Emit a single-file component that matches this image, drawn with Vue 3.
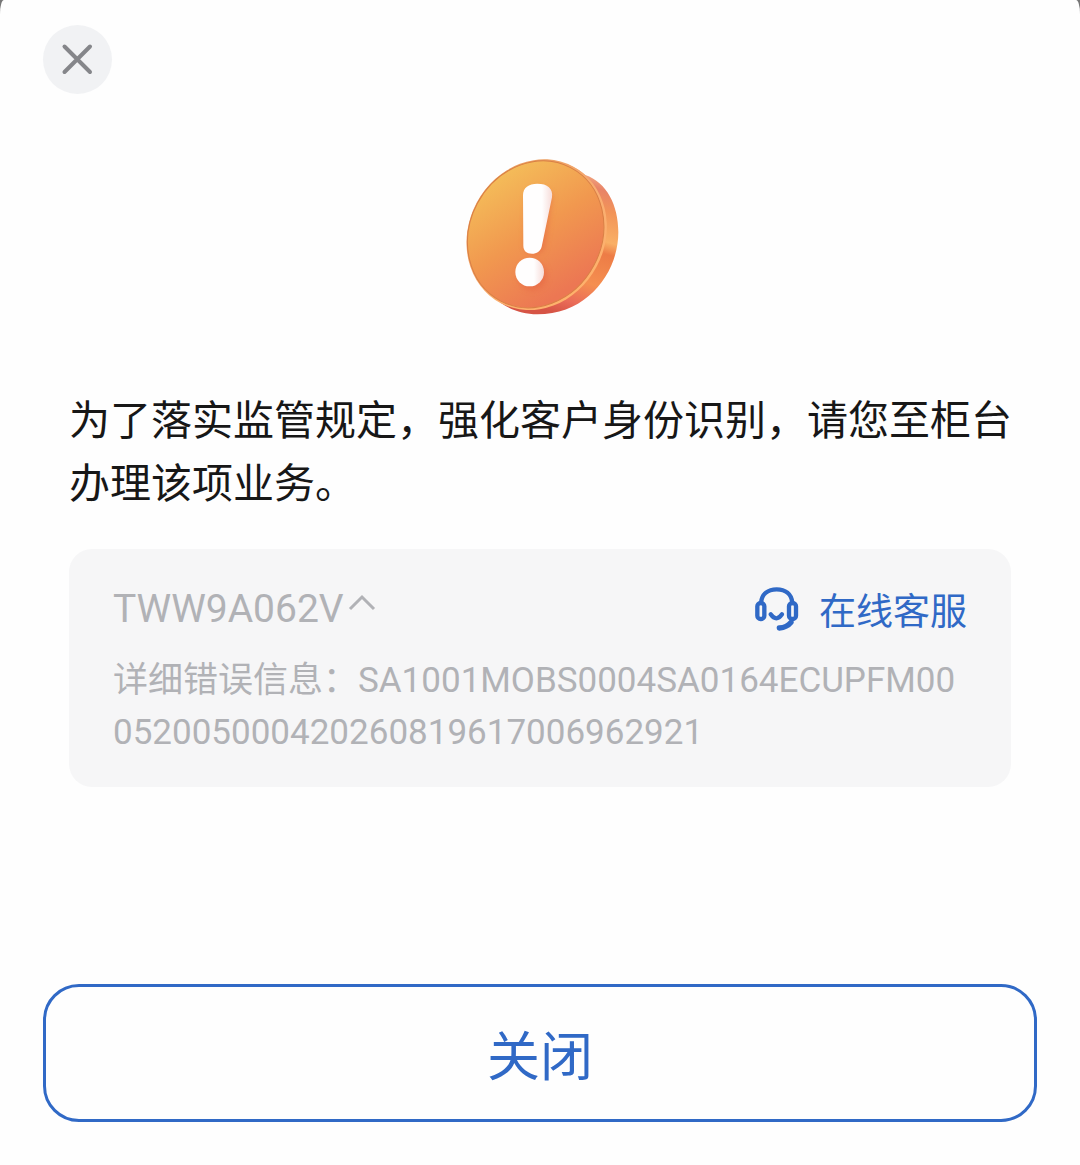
<script setup>
const code = 'TWW9A062V'
const detail = 'SA1001MOBS0004SA0164ECUPFM00052005000420260819617006962921'
</script>

<template>
  <main class="sheet">
    <button class="dismiss" type="button" aria-label="返回">
      <svg viewBox="0 0 69 69" aria-hidden="true">
        <path d="M21.5 21.5 47 47M47 21.5 21.5 47" />
      </svg>
    </button>

    <svg class="warning" viewBox="-15 0 570 555" aria-hidden="true">
      <defs>
        <linearGradient id="face" x1="90" y1="130" x2="330" y2="450" gradientUnits="userSpaceOnUse" gradientTransform="rotate(66 257 269)">
          <stop offset="0" stop-color="#f4bc59" />
          <stop offset=".5" stop-color="#f1984f" />
          <stop offset="1" stop-color="#ec7753" />
        </linearGradient>
        <linearGradient id="side" x1="460" y1="80" x2="340" y2="510" gradientUnits="userSpaceOnUse">
          <stop offset="0" stop-color="#f7b98c" />
          <stop offset=".12" stop-color="#e88367" />
          <stop offset=".25" stop-color="#f29458" />
          <stop offset=".45" stop-color="#f9b066" />
          <stop offset=".53" stop-color="#ed7c46" />
          <stop offset=".75" stop-color="#f58f50" />
          <stop offset=".9" stop-color="#ea6c58" />
          <stop offset="1" stop-color="#d65445" />
        </linearGradient>
        <linearGradient id="rim" x1="100" y1="80" x2="400" y2="460" gradientUnits="userSpaceOnUse" gradientTransform="rotate(62 260 269)">
          <stop offset="0" stop-color="#e6995a" />
          <stop offset=".5" stop-color="#f8ad72" />
          <stop offset="1" stop-color="#ffb26b" />
        </linearGradient>
        <linearGradient id="mark" x1="0" y1="0" x2="1" y2="0">
          <stop offset=".65" stop-color="#fffefe" />
          <stop offset="1" stop-color="#f6dcd9" />
        </linearGradient>
        <filter id="soft" x="-30%" y="-30%" width="160%" height="160%">
          <feGaussianBlur stdDeviation="9" />
        </filter>
      </defs>
      <path d="M320 52C354 56 384 70 406 90C470 112 505 180 505 262C505 380 415 508 262 508C210 508 165 490 125 450Z" fill="url(#side)" />
      <ellipse cx="260" cy="269" rx="232" ry="204" transform="rotate(-62 260 269)" fill="url(#rim)" />
      <ellipse cx="257" cy="268" rx="226" ry="198" transform="rotate(-62 257 268)" fill="url(#face)" stroke="#d97f45" stroke-width="3" />
      <g fill="#e45f3f" opacity=".55" filter="url(#soft)">
        <path d="M230 150Q260 110 306 150L282 310Q255 345 226 310Z" />
        <circle cx="247" cy="392" r="42" />
      </g>
      <path d="M219 151C219 128 236 116 262 116C292 116 310 130 306 157L275 305C271 319 260 326 246 326C230 326 220 317 220 302Z" fill="url(#mark)" />
      <circle cx="239" cy="381" r="43" fill="url(#mark)" />
    </svg>

    <p class="message">为了落实监管规定，强化客户身份识别，请您至柜台办理该项业务。</p>

    <section class="panel">
      <div class="panel-head">
        <button class="code" type="button" aria-expanded="true">
          {{ code }}
          <svg viewBox="0 0 28 18" aria-hidden="true"><path d="M2 15 14 3 26 15" /></svg>
        </button>
        <a class="service" href="#">
          <svg viewBox="0 0 132 132" aria-hidden="true">
            <path d="M18 48C20 20 40 7 65 7S110 20 112 48" />
            <rect x="7" y="48" width="21" height="48" rx="10" />
            <rect x="102" y="48" width="21" height="48" rx="10" />
            <path d="M47 82Q64 106 81 82" />
            <path d="M108 106Q96 121 73 123" class="mic" />
          </svg>
          在线客服
        </a>
      </div>
      <p class="detail">详细错误信息：{{ detail }}</p>
    </section>

    <button class="close" type="button">关闭</button>
  </main>
</template>

<style>
body {
  margin: 0;
  background: #777;
}
</style>

<style scoped>
.sheet {
  display: flex;
  flex-direction: column;
  box-sizing: border-box;
  min-height: 100vh;
  padding: 25px 43px 43px;
  border-radius: 4px 4px 0 0 / 14px 14px 0 0;
  background: #fefefe;
  font-family: Roboto, "Noto Sans CJK SC", sans-serif;
}

button {
  margin: 0;
  padding: 0;
  border: 0;
  background: none;
  font: inherit;
  cursor: pointer;
}

svg {
  display: block;
  flex: none;
}

.dismiss {
  width: 69px;
  height: 69px;
  border-radius: 50%;
  background: #f1f2f4;
}

.dismiss path {
  fill: none;
  stroke: #85868a;
  stroke-width: 4;
  stroke-linecap: round;
}

.warning {
  width: 190px;
  height: 185px;
  margin-top: 51px;
  align-self: center;
}

.message {
  margin: 56px 20px 0 26px;
  color: #171717;
  font-family: "Noto Sans CJK SC", sans-serif;
  font-size: 41px;
  line-height: 63px;
}

.panel {
  margin: 37px 26px 0;
  padding: 34px 44px 28px;
  border-radius: 23px;
  background: #f6f6f7;
  color: #b1b2b6;
}

.panel-head {
  display: flex;
  align-items: center;
  justify-content: space-between;
  height: 52px;
}

.code {
  display: flex;
  align-items: center;
  gap: 4px;
  color: inherit;
  font-size: 39px;
}

.code svg {
  width: 28px;
  height: 18px;
  margin-bottom: 12px;
}

.code path {
  fill: none;
  stroke: currentColor;
  stroke-width: 3;
}

.service {
  display: flex;
  align-items: center;
  gap: 20px;
  color: #3069c6;
  font-size: 37px;
  text-decoration: none;
}

.service svg {
  width: 44px;
  height: 44px;
}

.service path,
.service rect {
  fill: none;
  stroke: currentColor;
  stroke-width: 13;
  stroke-linecap: round;
}

.service .mic {
  stroke-width: 16;
}

.detail {
  margin: 20px 0 0;
  font-size: 35px;
  line-height: 52px;
  word-break: break-all;
}

.close {
  box-sizing: border-box;
  width: 100%;
  height: 138px;
  margin-top: auto;
  border: 3px solid #3069c6;
  border-radius: 36px;
  color: #3069c6;
  font-size: 53px;
}
</style>
